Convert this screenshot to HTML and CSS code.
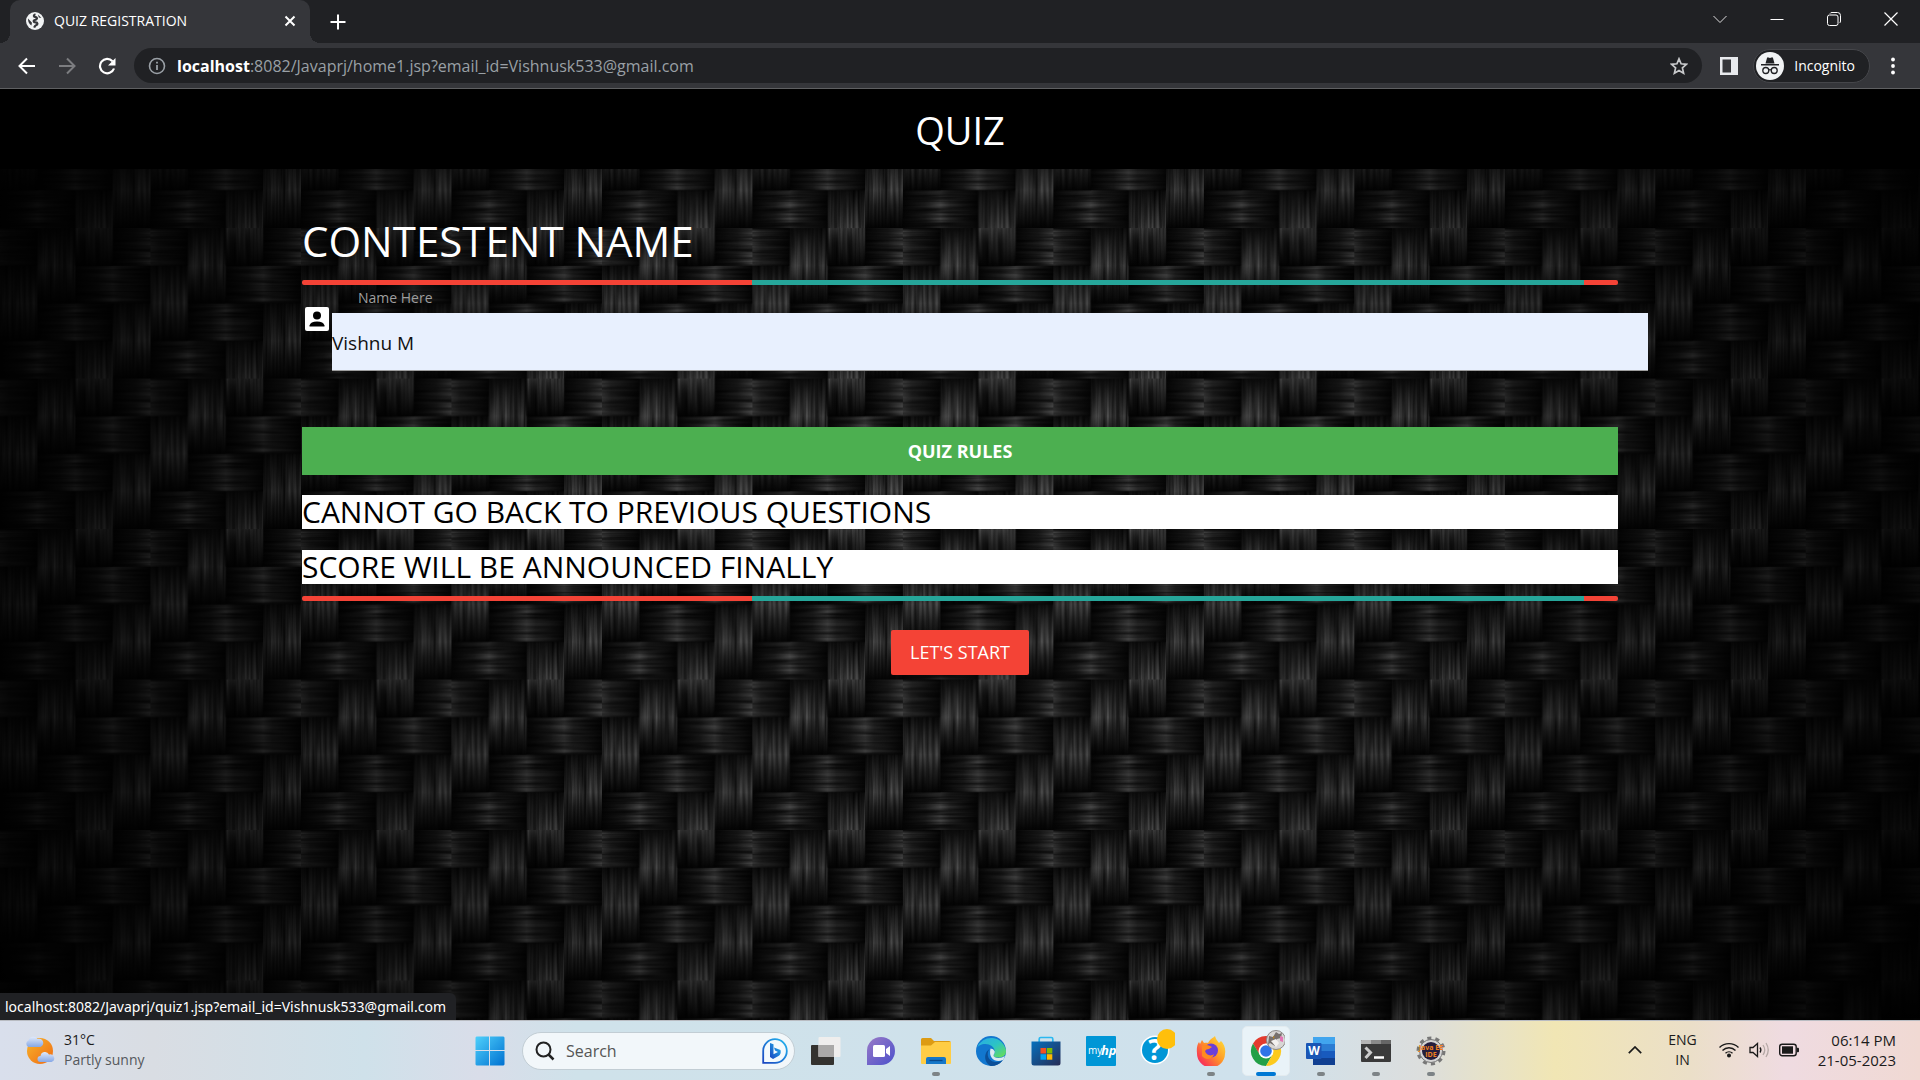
FILE: index.html
```html
<!DOCTYPE html>
<html lang="en">
<head>
<meta charset="utf-8">
<title>QUIZ REGISTRATION</title>
<link rel="stylesheet" href="styles.css">
</head>
<body>
<header class="browser">
  <div class="tabstrip">
    <div class="tab">
      <svg class="tab-icon" viewBox="0 0 18 18"><circle cx="9" cy="9" r="9" fill="#f1f3f4"/><path d="M9.500 2.200C7 3 7.500 5 9.500 5.200c2.400.2 1.600 2.600-.5 2.800-2 .2-1.600 2.200.4 2.300 2.600.1 2.600 2.300.6 2.900-1.300.5-1.400 1.500-1.800 2.500" fill="none" stroke="#35363a" stroke-width="2.200"/><path d="M2 6.500l4 4.200-.6 2.800Q2 11.500 2 6.500zM12 2.600l3.400 3.400-2.600-.4z" fill="#35363a"/></svg>
      <span class="tab-title">QUIZ REGISTRATION</span>
      <button class="tab-close" aria-label="Close tab"><svg width="12" height="12" viewBox="0 0 12 12"><path d="M1.500 1.500l9 9M10.500 1.500l-9 9" stroke="#fff" stroke-width="2"/></svg></button>
    </div>
    <button class="new-tab" aria-label="New tab"><svg width="16" height="16" viewBox="0 0 16 16"><path d="M8 .5v15M.5 8h15" stroke="#fff" stroke-width="2"/></svg></button>
    <div class="window-controls">
      <button aria-label="Search tabs"><svg width="14" height="14" viewBox="0 0 14 14"><path d="M.5 4L7 10.500 13.500 4" fill="none" stroke="#ddd"/></svg></button>
      <button aria-label="Minimize"><svg width="14" height="14" viewBox="0 0 14 14"><path d="M.5 7.500h13" stroke="#fff"/></svg></button>
      <button aria-label="Restore"><svg width="14" height="14" viewBox="0 0 14 14"><rect x=".5" y="3" width="10.500" height="10.500" rx="2" fill="none" stroke="#fff"/><path d="M3 1.500q.5-1 2-1h5.500a3 3 0 0 1 3 3V9q0 1.500-1 2" fill="none" stroke="#fff"/></svg></button>
      <button aria-label="Close"><svg width="14" height="14" viewBox="0 0 14 14"><path d="M.5.5l13 13M13.500.5l-13 13" stroke="#fff" stroke-width="1.200"/></svg></button>
    </div>
  </div>
  <div class="toolbar">
    <div class="nav-buttons">
      <button aria-label="Back"><svg width="18" height="18" viewBox="0 0 18 18"><path d="M17 9H2M9 1.500L1.500 9 9 16.500" fill="none" stroke="#fff" stroke-width="2"/></svg></button>
      <button aria-label="Forward"><svg width="18" height="18" viewBox="0 0 18 18"><path d="M1 9h15M9 1.500L16.500 9 9 16.500" fill="none" stroke="#7c7d80" stroke-width="2"/></svg></button>
      <button aria-label="Reload"><svg width="18" height="18" viewBox="0 0 18 18"><path d="M16 11.500A7.200 7.200 0 1 1 14.500 4.200" fill="none" stroke="#fff" stroke-width="2.200"/><path d="M17.500 1v7.500H10z" fill="#fff"/></svg></button>
    </div>
    <div class="omnibox">
      <svg width="18" height="18" viewBox="0 0 18 18"><circle cx="9" cy="9" r="7.500" fill="none" stroke="#9aa0a6" stroke-width="1.600"/><path d="M9 8v5M9 4.700v1.900" stroke="#9aa0a6" stroke-width="1.800"/></svg>
      <div class="url" role="textbox" aria-label="Address"><b>localhost</b>:8082/Javaprj/home1.jsp?email_id=Vishnusk533@gmail.com</div>
      <button aria-label="Bookmark"><svg width="18" height="18" viewBox="0 0 18 18"><path d="M9 1.800l2.100 5 5.400.5-4.100 3.600 1.200 5.300L9 13.400l-4.600 2.800 1.200-5.300L1.500 7.300l5.400-.5z" fill="none" stroke="#c8c9cb" stroke-width="1.700"/></svg></button>
    </div>
    <button class="side-panel" aria-label="Side panel"><svg width="18" height="18" viewBox="0 0 18 18"><path d="M0 0h18v18H0zM2.500 2.500v13H11v-13z" fill="#e8eaed" fill-rule="evenodd"/></svg></button>
    <button class="incognito">
      <svg width="28" height="28" viewBox="0 0 28 28"><circle cx="14" cy="14" r="14" fill="#f1f3f4"/><path d="M9.500 11.500l1.500-5.500q.4-1 1.400-.6l1.600.5 1.600-.5q1-.4 1.400.6l1.500 5.500zM5 12h18v1.500H5z" fill="#202124"/><g fill="none" stroke="#202124" stroke-width="1.300"><circle cx="9.800" cy="18.500" r="3"/><circle cx="18.200" cy="18.500" r="3"/><path d="M12.800 18q1.200-.8 2.400 0"/></g></svg>
      <span>Incognito</span>
    </button>
    <button class="menu" aria-label="Menu"><svg width="4" height="18" viewBox="0 0 4 18" fill="#fff"><circle cx="2" cy="2.500" r="1.900"/><circle cx="2" cy="9" r="1.900"/><circle cx="2" cy="15.500" r="1.900"/></svg></button>
  </div>
</header>

<div class="page">
  <svg class="weave" aria-hidden="true">
    <defs>
      <linearGradient id="gv" x2="0" y2="1"><stop offset="0" stop-color="#141414"/><stop offset=".25" stop-color="#3c3c3c"/><stop offset=".5" stop-color="#626262"/><stop offset=".7" stop-color="#343434"/><stop offset="1" stop-color="#060606"/></linearGradient>
      <linearGradient id="gh"><stop offset="0" stop-color="#080808"/><stop offset=".3" stop-color="#282828"/><stop offset=".5" stop-color="#585858"/><stop offset=".62" stop-color="#343434"/><stop offset="1" stop-color="#080808"/></linearGradient>
      <filter id="fv" x="0" y="0" width="1" height="1" color-interpolation-filters="sRGB"><feTurbulence type="fractalNoise" baseFrequency=".32 .015" numOctaves="2" seed="4"/><feColorMatrix values="1.200 0 0 0 -.05 1.200 0 0 0 -.05 1.200 0 0 0 -.05 0 0 0 0 1"/><feComposite in2="SourceGraphic" operator="arithmetic" k1="1"/></filter>
      <filter id="fh" x="0" y="0" width="1" height="1" color-interpolation-filters="sRGB"><feTurbulence type="fractalNoise" baseFrequency=".015 .32" numOctaves="2" seed="9"/><feColorMatrix values="1.200 0 0 0 -.05 1.200 0 0 0 -.05 1.200 0 0 0 -.05 0 0 0 0 1"/><feComposite in2="SourceGraphic" operator="arithmetic" k1="1"/></filter>
      <pattern id="twill" width="160" height="160" patternUnits="userSpaceOnUse" patternTransform="translate(0 -11.400) scale(.9405)">
        <rect width="160" height="160" fill="#020202"/>
        <g fill="url(#gh)">
          <rect x="-40" y="0" width="80" height="40" filter="url(#fh)"/>
          <rect x="120" y="0" width="80" height="40" filter="url(#fh)"/>
          <rect x="80" y="40" width="80" height="40" filter="url(#fh)"/>
          <rect x="40" y="80" width="80" height="40" filter="url(#fh)"/>
          <rect x="0" y="120" width="80" height="40" filter="url(#fh)"/>
        </g>
        <g fill="url(#gv)">
          <rect x="0" y="40" width="40" height="80" filter="url(#fv)"/>
          <rect x="40" y="0" width="40" height="80" filter="url(#fv)"/>
          <rect x="80" y="-40" width="40" height="80" filter="url(#fv)"/>
          <rect x="80" y="120" width="40" height="80" filter="url(#fv)"/>
          <rect x="120" y="80" width="40" height="80" filter="url(#fv)"/>
        </g>
      </pattern>
    </defs>
    <rect width="100%" height="100%" fill="url(#twill)"/>
  </svg>
  <div class="vignette"></div>
  <nav class="navbar">QUIZ</nav>
  <main class="container">
    <h1>CONTESTENT NAME</h1>
    <div class="progress"><div class="bar"></div></div>
    <div class="field">
      <label for="name">Name Here</label>
      <svg class="prefix" viewBox="0 0 24 24"><rect width="24" height="24" rx="2" fill="#fff"/><circle cx="12" cy="8.500" r="4" fill="#000"/><path d="M4.500 19.500v-1q1-4 7.500-4t7.500 4v1z" fill="#000"/></svg>
      <input id="name" type="text" value="Vishnu M">
    </div>
    <h2>QUIZ RULES</h2>
    <p class="rule">CANNOT GO BACK TO PREVIOUS QUESTIONS</p>
    <p class="rule">SCORE WILL BE ANNOUNCED FINALLY</p>
    <div class="progress"><div class="bar"></div></div>
    <div class="actions"><button class="start">LET'S START</button></div>
  </main>
  <div class="status">localhost:8082/Javaprj/quiz1.jsp?email_id=Vishnusk533@gmail.com</div>
</div>

<footer class="taskbar">
  <div class="weather">
    <svg width="30" height="30" viewBox="0 0 30 30"><defs><linearGradient id="sun" x2="1" y2="1"><stop offset="0" stop-color="#f7b52c"/><stop offset="1" stop-color="#f06a12"/></linearGradient><linearGradient id="cl" x2="0" y2="1"><stop offset="0" stop-color="#dfe9fb"/><stop offset="1" stop-color="#86a8e6"/></linearGradient></defs><circle cx="15" cy="16" r="13" fill="url(#sun)"/><path d="M3.500 12a3.500 3.500 0 0 1 0-6.500 5 5 0 0 1 9-1.500 3.500 3.500 0 0 1 3 8z" fill="url(#cl)"/><path d="M15.500 27a3 3 0 0 1 0-6 4.500 4.500 0 0 1 8.500-1.500 3.800 3.800 0 0 1 2.500 7.500z" fill="url(#cl)"/></svg>
    <div><div class="temp">31°C</div><div class="sky">Partly sunny</div></div>
  </div>
  <div class="apps">
    <button class="app" aria-label="Start"><svg width="30" height="30" viewBox="0 0 30 30"><defs><linearGradient id="win" x2="1" y2="1"><stop offset="0" stop-color="#4fd0fb"/><stop offset="1" stop-color="#0071d1"/></linearGradient></defs><path d="M1.500.5H14V14H.5V1.500zM15 .5h13.500l1 1V14H15zM.5 15H14v14.500H1.500l-1-1zM15 15h14.500v13.500l-1 1H15z" fill="url(#win)"/></svg></button>
    <label class="search">
      <svg width="20" height="20" viewBox="0 0 20 20"><circle cx="8.500" cy="8.500" r="7" fill="none" stroke="#222" stroke-width="2"/><path d="M13.500 13.500l5 5" stroke="#222" stroke-width="2.500"/></svg>
      <input type="text" placeholder="Search" aria-label="Search">
      <svg width="26" height="26" viewBox="0 0 26 26"><defs><linearGradient id="bg" x1="1" x2="0" y2="1"><stop offset="0" stop-color="#24b8f0"/><stop offset="1" stop-color="#1a45c0"/></linearGradient></defs><path d="M1.200 24.800V13A11.800 11.800 0 1 1 13 24.800z" fill="#f4fafd" stroke="url(#bg)" stroke-width="1.800"/><path d="M8 5l3.500 1.200v10L16 14l-3-1.500-1-3 6.500 2.500q1 4-2 6L11 21l-3-2z" fill="url(#bg)"/></svg>
    </label>
    <button class="app" aria-label="Task view"><svg width="30" height="30" viewBox="0 0 30 30"><rect x="0" y="9" width="23" height="20" rx="1" fill="#33322f"/><rect x="7.500" y="1" width="22" height="20" rx="1" fill="#efeeed"/><path d="M7.500 9H23v12H7.500z" fill="#aaa9a8"/></svg></button>
    <button class="app" aria-label="Chat"><svg width="30" height="30" viewBox="0 0 30 30"><defs><linearGradient id="chat" x2="1" y2="1"><stop offset="0" stop-color="#9a7ac6"/><stop offset="1" stop-color="#4b50cc"/></linearGradient></defs><path d="M1 29V15A14 14 0 1 1 15 29z" fill="url(#chat)"/><rect x="7" y="9" width="12" height="12" rx="1.500" fill="#fff"/><path d="M20 13l4-3v10l-4-3z" fill="#fff"/></svg></button>
    <button class="app running" aria-label="File Explorer"><svg width="30" height="30" viewBox="0 0 30 30"><path d="M0 3.500Q0 2 1.500 2H10l3 3h15q2 0 2 2v4H0z" fill="#dd9b13"/><path d="M0 9.500h10L14 6h16v21q0 1-1 1H1q-1 0-1-1z" fill="#ffcd45"/><path d="M5 28v-5q0-2 2-2h16q2 0 2 2v5z" fill="#1577c8"/><path d="M8.500 24.500h13" stroke="#08488a" stroke-width="1.300"/></svg></button>
    <button class="app" aria-label="Edge"><svg width="30" height="30" viewBox="0 0 30 30"><defs><linearGradient id="e1" x2="1" y2="1"><stop offset="0" stop-color="#28a9e8"/><stop offset=".5" stop-color="#2cc4c4"/><stop offset="1" stop-color="#6de04a"/></linearGradient></defs><circle cx="15" cy="15" r="15" fill="#1277cf"/><path d="M1 12A15 15 0 0 1 30 15c0 5-4 6.500-8 6.500-3.500 0-4.500-1-4.500-2 0-.8 1.300-1.500 1.300-4C18.800 11 14 8 9.500 8 5 8 2 10 1 12z" fill="url(#e1)"/><path d="M14.500 12.500a5 5 0 0 1 4.300 3c0 2-1.300 3-1.300 4 0 1.500 2 2.500 5 2.500 2.500 0 4.500-.7 6.300-2Q28.500 22 27 24c-7 3-15-1-12.500-11.500z" fill="#dceaf0"/><path d="M14.500 12.500C10 15 10.500 25 19 26q5 .5 8-2A15 15 0 0 1 15 30C9 28 6 17 14.500 12.500z" fill="#0b4f98"/></svg></button>
    <button class="app" aria-label="Store"><svg width="30" height="30" viewBox="0 0 30 30"><defs><linearGradient id="st" x2="1" y2="1"><stop offset="0" stop-color="#0670bd"/><stop offset="1" stop-color="#272c55"/></linearGradient></defs><path d="M8.200 7V3q0-1.500 1.500-1.500h10.600Q21.800 1.500 21.800 3v4" fill="none" stroke="#2bb8f0" stroke-width="1.700"/><path d="M.5 5.500h29V27q0 2.500-2.500 2.500H3Q.5 29.500.5 27z" fill="url(#st)"/><path d="M9.500 12H15v5.500H9.500z" fill="#f25022"/><path d="M15.800 12h5.500v5.500h-5.500z" fill="#7fba00"/><path d="M9.500 18.200H15v5.500H9.500z" fill="#00a4ef"/><path d="M15.800 18.200h5.500v5.500h-5.500z" fill="#ffb900"/></svg></button>
    <button class="app" aria-label="myHP"><svg width="30" height="30" viewBox="0 0 30 30"><rect width="30" height="30" rx="1" fill="#0096d6"/><text x="2" y="18" class="my">my</text><text x="15" y="19" class="hp">hp</text></svg></button>
    <button class="app" aria-label="Help"><svg class="wide" width="38" height="38" viewBox="0 0 38 38"><circle cx="18" cy="22" r="14.500" fill="#fff"/><circle cx="18" cy="22" r="13" fill="#0096d6"/><text x="18" y="32" class="q">?</text><circle cx="30" cy="11" r="10" fill="#ffbf0b"/></svg></button>
    <button class="app running" aria-label="Firefox"><svg width="30" height="30" viewBox="0 0 30 30"><defs><linearGradient id="ff" x1="1" y1="0" x2="0" y2="1"><stop offset="0" stop-color="#ffe83c"/><stop offset=".45" stop-color="#ff9a26"/><stop offset=".8" stop-color="#fa3c50"/><stop offset="1" stop-color="#e0208a"/></linearGradient></defs><path d="M19 0c1 4 3 5 4 7l2-2c3 3 5 8 4 13A14 14 0 0 1 1 17C.5 13 1 9 3 6l1 2 2-4 2 3c2-.5 4 0 4 0 2-4 5-5 7-7z" fill="url(#ff)"/><circle cx="15" cy="14.500" r="7" fill="#6b3fd8"/><path d="M6 10q4-2 8 0l2 1-3 2q-3 0-4 2c1 4 6 6 9 3-1 5-8 7-12 2z" fill="#ff8a20"/></svg></button>
    <button class="app running active" aria-label="Chrome"><svg class="wide" width="38" height="38" viewBox="0 0 38 38"><path d="M19 8a15 15 0 0 0-13 7.500L12.500 27l2-7.500L19 15.500h13A15 15 0 0 0 19 8z" fill="#e33b2e"/><path d="M6 15.500A15 15 0 0 0 19 38l6.500-11.500L19 30l-6.500-3.700z" fill="#22a047"/><path d="M32 15.500A15 15 0 0 1 19 38l6.500-11.500V19L19 15.500z" fill="#fdca1d"/><circle cx="19" cy="23" r="7.500" fill="#fff"/><circle cx="19" cy="23" r="5.800" fill="#2f74e8"/><circle cx="29" cy="12" r="9.500" fill="#d8d6d5" stroke="#8c8988"/><path d="M22 8l4 1 3-5 3 2 3-1-1 5-4 1-2 7-5-3-2 2z" fill="#77706d"/><path d="M24 13l5-2 3 4-3 4z" fill="#f3f1ef"/><path d="M33 8l3 1v5l-3-1z" fill="#e275b4"/><path d="M26 8l2 1-2 2z" fill="#b48226"/></svg></button>
    <button class="app running" aria-label="Word"><svg width="30" height="30" viewBox="0 0 30 30"><path d="M7 1h22v7H7z" fill="#41a5ee"/><path d="M7 8h22v7H7z" fill="#2b7cd3"/><path d="M7 15h22v7H7z" fill="#185abd"/><path d="M7 22h22v7H7z" fill="#103f91"/><rect x="0" y="7" width="15.500" height="16" rx="1" fill="#1a56b5"/><text x="8" y="19" class="w">W</text></svg></button>
    <button class="app running" aria-label="Terminal"><svg width="30" height="30" viewBox="0 0 30 30"><rect x="0" y="4" width="30" height="22" rx="1" fill="#3a3a3a"/><path d="M0 8V5q0-1 1-1h9v4z" fill="#b5b5b5"/><path d="M10 4h10v4H10z" fill="#8a8a8a"/><path d="M20 4h9q1 0 1 1v3H20z" fill="#666"/><path d="M4.500 11.500l5 5-5 5.500" fill="none" stroke="#ccc" stroke-width="3"/><path d="M13 21.500h10" stroke="#fff" stroke-width="2.500"/></svg></button>
    <button class="app running" aria-label="Eclipse Java EE IDE"><svg width="30" height="30" viewBox="0 0 30 30"><circle cx="15" cy="15" r="12.800" fill="none" stroke="#777" stroke-width="3.400" stroke-dasharray="4 4.040"/><circle cx="15" cy="15" r="11.500" fill="#d4d4d4" stroke="#777"/><circle cx="15" cy="15" r="9" fill="#251d3c"/><text x="15" y="14" class="ee">Java EE</text><text x="15" y="21" class="ee">IDE</text></svg></button>
  </div>
  <div class="tray">
    <button class="chev" aria-label="Hidden icons"><svg width="14" height="8" viewBox="0 0 14 8"><path d="M.8 7.200L7 1l6.200 6.200" fill="none" stroke="#1a1a1a" stroke-width="1.700"/></svg></button>
    <div class="lang">ENG<br>IN</div>
    <div class="net">
      <svg width="20" height="20" viewBox="0 0 20 20" fill="none" stroke="#1a1a1a" stroke-width="1.400"><path d="M.5 7.500a13.500 13.500 0 0 1 19 0M3.500 10.500a9 9 0 0 1 13 0M6.500 13.300a5 5 0 0 1 7 0"/><circle cx="10" cy="15.500" r="1.300" fill="#1a1a1a"/></svg>
      <svg width="20" height="20" viewBox="0 0 20 20" fill="none" stroke="#1a1a1a" stroke-width="1.300"><path d="M1 7.500h3L8.500 3.500v13L4 12.500H1z"/><path d="M11 7.500q1.800 2.500 0 5"/><path d="M14 5q3.500 5 0 10M17 3q4.500 7 0 14" stroke="#b5a9a6"/></svg>
      <svg width="20" height="20" viewBox="0 0 20 20"><rect x=".7" y="4.200" width="16.500" height="11.500" rx="2.500" fill="none" stroke="#1a1a1a" stroke-width="1.400"/><rect x="3" y="6.300" width="11" height="7.400" fill="#1a1a1a"/><path d="M18 7.800h1q1 0 1 1v2.400q0 1-1 1h-1z" fill="#1a1a1a"/></svg>
    </div>
    <div class="clock">06:14 PM<br>21-05-2023</div>
  </div>
</footer>
</body>
</html>
```
FILE: styles.css
```css
* { box-sizing: border-box; }
body {
  margin: 0;
  min-height: 100vh;
  display: flex;
  flex-direction: column;
  font-family: "Open Sans", "Noto Sans", sans-serif;
  background: #000;
}
button { border: 0; padding: 0; background: none; font: inherit; color: inherit; }
svg { display: block; flex: none; }

/* browser chrome */
.browser { border-bottom: 1px solid #5f6062; color: #fff; }
.tabstrip { display: flex; align-items: center; height: 43px; background: #202124; padding-left: 10px; }
.tab {
  position: relative;
  display: flex;
  align-items: center;
  gap: 10px;
  width: 300px;
  height: 43px;
  padding: 0 14px 2px 16px;
  background: #35363a;
  border-radius: 10px 10px 0 0;
  font-size: 14px;
}
.tab::before, .tab::after {
  content: "";
  position: absolute;
  bottom: 0;
  width: 10px;
  height: 10px;
}
.tab::before { left: -10px; background: radial-gradient(circle at 0 0, #202124 10px, #35363a 10px); }
.tab::after { right: -10px; background: radial-gradient(circle at 100% 0, #202124 10px, #35363a 10px); }
.tab-icon { width: 18px; height: 18px; }
.tab-title { flex: 1; }
.new-tab { margin-left: 20px; }
.window-controls { display: flex; margin-left: auto; padding: 0 1px 6px 0; }
.window-controls button { display: grid; place-items: center; width: 57px; height: 36px; }
.toolbar { display: flex; align-items: center; height: 45px; background: #35363a; padding: 0 25px 0 18px; }
.nav-buttons { display: flex; gap: 22px; margin-right: 18px; }
.omnibox {
  flex: 1;
  display: flex;
  align-items: center;
  gap: 11px;
  height: 35px;
  padding: 0 14px;
  border-radius: 18px;
  background: #202124;
  color: #9aa0a6;
  font-size: 16px;
}
.url { flex: 1; }
.url b { color: #fff; }
.side-panel { margin: 0 15px 0 18px; }
.incognito {
  display: flex;
  align-items: center;
  gap: 10px;
  height: 34px;
  padding: 0 12px 0 2px;
  border: 1px solid #45464a;
  border-radius: 17px;
  background: #202124;
  font-size: 14px;
}
.incognito span { padding-right: 2px; }
.menu { margin-left: 21px; }

/* page */
.page { position: relative; flex: 1; }
.weave, .vignette { position: absolute; inset: 0; width: 100%; height: 100%; }
.vignette { background: radial-gradient(ellipse 56% 105% at 50% 50%, rgba(0,0,0,0) 0%, rgba(0,0,0,.15) 40%, rgba(0,0,0,.6) 75%, rgba(0,0,0,.95) 100%); }
.navbar {
  position: relative;
  height: 80px;
  background: #000;
  color: #fff;
  font-size: 38px;
  line-height: 82px;
  text-align: center;
}
.container { position: relative; width: 70%; margin: 0 auto; padding: 44px 14px 0; }
h1 { margin: 0 0 11px; color: #fff; font-size: 42px; line-height: 56px; font-weight: 400; }
.progress { height: 5px; border-radius: 2px; background: #f44336; overflow: hidden; }
.bar { height: 100%; margin: 0 34px 0 450px; background: #26a69a; }
.field { position: relative; height: 142px; padding: 28px 0 0 30px; }
.field label { position: absolute; left: 56px; top: 2px; color: #9e9e9e; font-size: 14px; line-height: 22px; }
.prefix { position: absolute; left: 3px; top: 22px; width: 24px; height: 24px; }
.field input {
  display: block;
  width: calc(100% + 30px);
  height: 58px;
  padding: 2px 0 0;
  border: 0;
  border-bottom: 1px solid #9e9e9e;
  background: #e8f0fe;
  color: #111;
  font: 19px "Open Sans", "Noto Sans", sans-serif;
}
h2 { margin: 0 0 20px; background: #4caf50; color: #fff; font-size: 18px; line-height: 48px; font-weight: 700; text-align: center; }
.rule { margin: 0 0 21px; background: #fff; color: #000; font-size: 30px; line-height: 34px; }
.rule + .progress { margin-top: -9px; }
.actions { display: flex; justify-content: center; padding-top: 29px; }
.start { height: 45px; padding: 0 19px; border-radius: 2px; background: #f44336; color: #fff; font-size: 18px; line-height: 45px; }
.status {
  position: absolute;
  left: 0;
  bottom: 0;
  padding: 0 10px 0 5px;
  border-radius: 0 6px 0 0;
  background: #202124;
  color: #fff;
  font-family: "Noto Sans", "Open Sans", sans-serif;
  font-size: 14px;
  line-height: 27px;
}

/* taskbar */
.taskbar {
  display: grid;
  grid-template-columns: 1fr auto 1fr;
  align-items: center;
  height: 60px;
  border-top: 1px solid #b9bcc2;
  background: linear-gradient(90deg, #d9dfec 0%, #d9dde3 8%, #cfe1ea 19%, #d9dde9 25%, #cfe2ea 30%, #cfe1ec 66%, #dcdedd 74%, #f1e6b4 81%, #ebdfc8 88%, #efdbe1 93%, #f0d9d3 100%);
  color: #1b1b1b;
  font-size: 14px;
  line-height: 20px;
}
.weather { display: flex; gap: 9px; align-items: center; padding: 0 0 2px 25px; }
.sky { color: #55585c; }
.apps { display: flex; align-items: center; }
.app { position: relative; display: grid; place-items: center; width: 55px; height: 50px; }
.wide { margin-bottom: 8px; }
.running::after {
  content: "";
  position: absolute;
  left: 24px;
  bottom: 0;
  width: 8px;
  height: 4px;
  border-radius: 2px;
  background: #7d8386;
}
.active::before {
  content: "";
  position: absolute;
  inset: 0 3px 0 4px;
  border-radius: 5px;
  border: 1px solid #e3ebef;
  background: #e9f3f8;
}
.active svg { position: relative; }
.active::after { left: 18px; width: 20px; background: #0078d4; }
.search {
  display: flex;
  align-items: center;
  width: 273px;
  height: 38px;
  margin: 0 3px 0 5px;
  padding: 0 6px 0 12px;
  border: 1px solid #c2cdd4;
  border-radius: 19px;
  background: #f2f7fa;
}
.search input { flex: 1; min-width: 0; margin-left: 11px; padding: 0; border: 0; background: none; font: 16px "Open Sans", "Noto Sans", sans-serif; }
.search input::placeholder { color: #555; opacity: 1; }
.tray { display: flex; align-items: center; justify-content: flex-end; padding: 0 24px 2px 0; }
.lang { margin-left: 26px; text-align: center; }
.net { display: flex; gap: 10px; margin: 0 19px 0 22px; }
.clock { text-align: right; font-size: 15px; }
.my { font: 10px "Open Sans", sans-serif; fill: #fff; }
.hp { font: italic 700 13px "Open Sans", sans-serif; fill: #fff; }
.q { font: 700 28px "Open Sans", sans-serif; fill: #fff; text-anchor: middle; }
.w { font: 700 12px "Open Sans", sans-serif; fill: #fff; text-anchor: middle; }
.ee { font: 700 7px "Open Sans", sans-serif; fill: #f08020; text-anchor: middle; }
```
